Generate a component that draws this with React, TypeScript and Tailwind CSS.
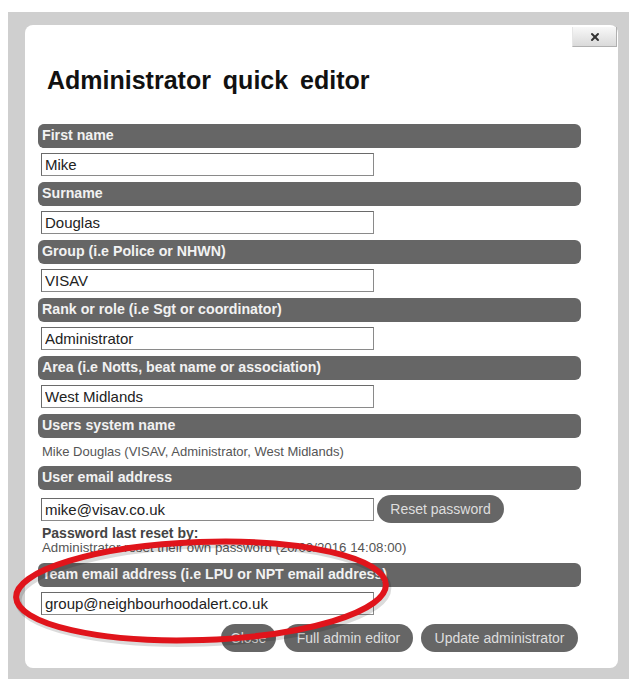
import { X } from "lucide-react";

type Field = { label: string; value: string };

const fields: Field[] = [
  { label: "First name", value: "Mike" },
  { label: "Surname", value: "Douglas" },
  { label: "Group (i.e Police or NHWN)", value: "VISAV" },
  { label: "Rank or role (i.e Sgt or coordinator)", value: "Administrator" },
  { label: "Area (i.e Notts, beat name or association)", value: "West Midlands" },
];

function Bar({ children }: { children: React.ReactNode }) {
  return (
    <div className="h-[24px] rounded-[6px] bg-[#666666] pl-[4px] flex items-center text-[14.2px] font-bold text-[#f2f2f2] whitespace-nowrap">
      {children}
    </div>
  );
}

function TextBox({ value }: { value: string }) {
  return (
    <input
      readOnly
      defaultValue={value}
      className="block ml-[3px] w-[333px] h-[23px] border border-[#8a8a8a] border-t-[#6a6a6a] border-l-[#6a6a6a] bg-white px-[3px] text-[15px] text-[#222] outline-none"
    />
  );
}

function PillButton({ label, width }: { label: string; width: string }) {
  return (
    <button
      className={`${width} h-[28px] rounded-full bg-[#666666] text-[14px] text-[#dedede] flex items-center justify-center whitespace-nowrap`}
    >
      {label}
    </button>
  );
}

export default function App() {
  return (
    <div className="relative w-[629px] h-[679px] bg-white pt-[12px] pl-[8px] flex font-['Liberation_Sans',Arial,sans-serif]">
      {/* Grey modal frame */}
      <div className="flex-1 bg-[#cfcfcf] pt-[13px] pl-[17px] pr-[11px] pb-[11px]">
        <div className="h-full bg-white rounded-[8px] pt-[2px]">
          {/* Close box */}
          <div className="flex justify-end pr-[1px]">
            <div className="w-[45px] h-[20px] flex items-center justify-center bg-gradient-to-b from-[#f8f8f8] to-[#dadada] border-b border-r border-[#b0b0b0] border-l border-l-[#e6e6e6]">
              <X size={12} strokeWidth={4} className="text-[#333]" />
            </div>
          </div>

          <h1 className="mt-[20px] ml-[22px] text-[25px] leading-[26px] font-bold text-[#111] [word-spacing:5px]">
            Administrator quick editor
          </h1>

          <div className="mt-[31px] ml-[13px] w-[543px]">
            {fields.map((f) => (
              <div key={f.label} className="mb-[6px]">
                <Bar>{f.label}</Bar>
                <div className="mt-[5px]">
                  <TextBox value={f.value} />
                </div>
              </div>
            ))}

            <Bar>Users system name</Bar>
            <div className="h-[28px] flex items-center pl-[4px] text-[13px] text-[#555]">
              Mike Douglas (VISAV, Administrator, West Midlands)
            </div>

            <Bar>User email address</Bar>
            <div className="mt-[5px] h-[28px] flex items-center">
              <TextBox value="mike@visav.co.uk" />
              <div className="ml-[3px]">
                <PillButton label="Reset password" width="w-[127px]" />
              </div>
            </div>
            <div className="mt-[3px] pl-[4px] text-[14px] leading-[14px] font-bold text-[#444]">
              Password last reset by:
            </div>
            <div className="mt-[1px] mb-[8px] pl-[4px] text-[13.3px] leading-[14px] text-[#555]">
              Administrator reset their own password (20/09/2016 14:08:00)
            </div>

            <Bar>Team email address (i.e LPU or NPT email address)</Bar>
            <div className="mt-[5px]">
              <TextBox value="group@neighbourhoodalert.co.uk" />
            </div>

            <div className="mt-[9px] pr-[3px] flex justify-end gap-[8px]">
              <PillButton label="Close" width="w-[55px]" />
              <PillButton label="Full admin editor" width="w-[129px]" />
              <PillButton label="Update administrator" width="w-[157px]" />
            </div>
          </div>
        </div>
      </div>

      {/* Hand-drawn highlight ring */}
      <svg
        className="absolute left-0 top-0 pointer-events-none"
        width="629"
        height="679"
        viewBox="0 0 629 679"
      >
        <ellipse
          cx="203"
          cy="594"
          rx="185"
          ry="49"
          transform="rotate(-2 203 594)"
          fill="none"
          stroke="#000"
          strokeOpacity="0.14"
          strokeWidth="7"
        />
        <ellipse
          cx="201"
          cy="591"
          rx="185"
          ry="49"
          transform="rotate(-2 201 591)"
          fill="none"
          stroke="#e0141b"
          strokeWidth="6"
        />
      </svg>
    </div>
  );
}
